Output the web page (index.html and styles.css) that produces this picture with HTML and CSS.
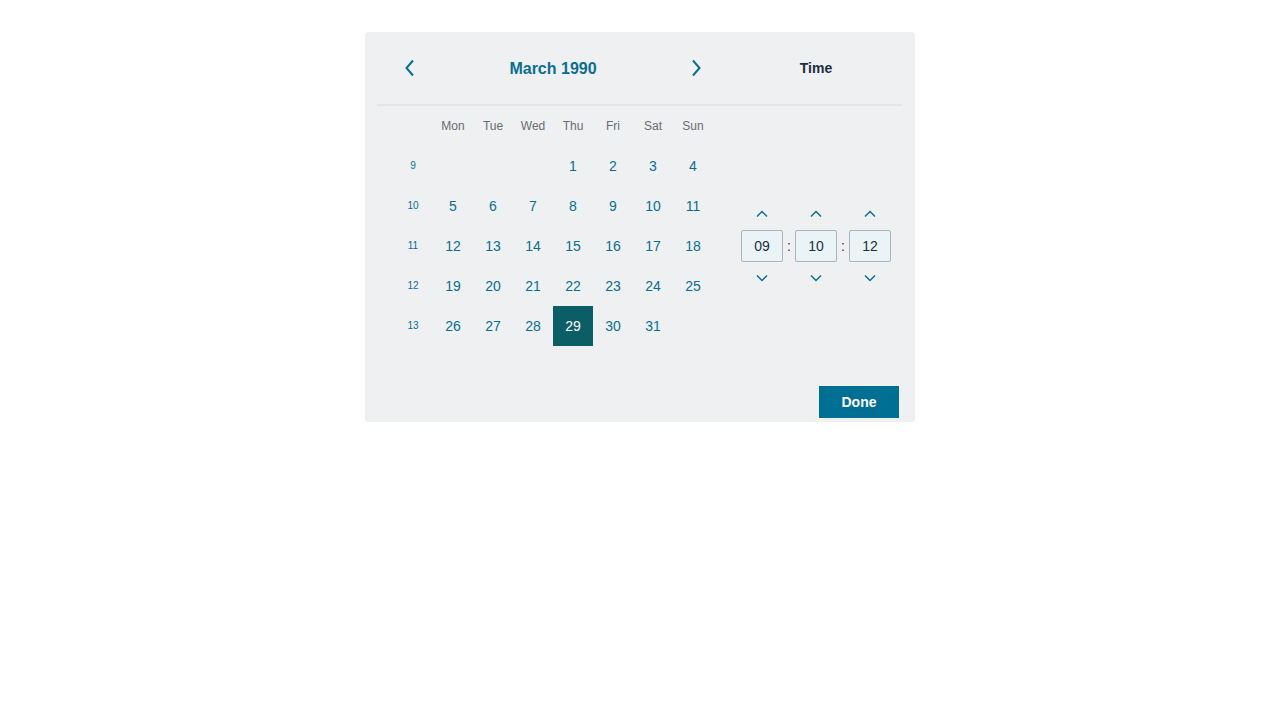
FILE: index.html
```html
<!DOCTYPE html>
<html>
<head>
<meta charset="utf-8">
<link rel="stylesheet" href="styles.css">
</head>
<body>
<div class="picker">
  <div class="top">
    <div class="cal-head">
      <button class="nav"><svg width="12" height="18" viewBox="0 0 12 18"><path d="M10 1.5 L3.5 9 L10 16.5" fill="none" stroke="currentColor" stroke-width="2"/></svg></button>
      <div class="title">March 1990</div>
      <button class="nav"><svg width="12" height="18" viewBox="0 0 12 18"><path d="M2 1.5 L8.5 9 L2 16.5" fill="none" stroke="currentColor" stroke-width="2"/></svg></button>
    </div>
    <div class="time-head">Time</div>
  </div>
  <div class="body">
    <div class="cal">
      <div class="cell"></div>
      <div class="cell dn">Mon</div><div class="cell dn">Tue</div><div class="cell dn">Wed</div><div class="cell dn">Thu</div><div class="cell dn">Fri</div><div class="cell dn">Sat</div><div class="cell dn">Sun</div>

      <div class="cell wk">9</div>
      <div class="cell"></div><div class="cell"></div><div class="cell"></div>
      <div class="cell d">1</div><div class="cell d">2</div><div class="cell d">3</div><div class="cell d">4</div>

      <div class="cell wk">10</div>
      <div class="cell d">5</div><div class="cell d">6</div><div class="cell d">7</div><div class="cell d">8</div><div class="cell d">9</div><div class="cell d">10</div><div class="cell d">11</div>

      <div class="cell wk">11</div>
      <div class="cell d">12</div><div class="cell d">13</div><div class="cell d">14</div><div class="cell d">15</div><div class="cell d">16</div><div class="cell d">17</div><div class="cell d">18</div>

      <div class="cell wk">12</div>
      <div class="cell d">19</div><div class="cell d">20</div><div class="cell d">21</div><div class="cell d">22</div><div class="cell d">23</div><div class="cell d">24</div><div class="cell d">25</div>

      <div class="cell wk">13</div>
      <div class="cell d">26</div><div class="cell d">27</div><div class="cell d">28</div><div class="cell d sel">29</div><div class="cell d">30</div><div class="cell d">31</div><div class="cell"></div>
    </div>
    <div class="time">
      <div class="spin">
        <button class="arrow"><svg width="12" height="8" viewBox="0 0 12 8"><path d="M1 6.5 L6 1.5 L11 6.5" fill="none" stroke="currentColor" stroke-width="1.5"/></svg></button>
        <div class="field">09</div>
        <button class="arrow"><svg width="12" height="8" viewBox="0 0 12 8"><path d="M1 1.5 L6 6.5 L11 1.5" fill="none" stroke="currentColor" stroke-width="1.5"/></svg></button>
      </div>
      <div class="colon">:</div>
      <div class="spin">
        <button class="arrow"><svg width="12" height="8" viewBox="0 0 12 8"><path d="M1 6.5 L6 1.5 L11 6.5" fill="none" stroke="currentColor" stroke-width="1.5"/></svg></button>
        <div class="field">10</div>
        <button class="arrow"><svg width="12" height="8" viewBox="0 0 12 8"><path d="M1 1.5 L6 6.5 L11 1.5" fill="none" stroke="currentColor" stroke-width="1.5"/></svg></button>
      </div>
      <div class="colon">:</div>
      <div class="spin">
        <button class="arrow"><svg width="12" height="8" viewBox="0 0 12 8"><path d="M1 6.5 L6 1.5 L11 6.5" fill="none" stroke="currentColor" stroke-width="1.5"/></svg></button>
        <div class="field">12</div>
        <button class="arrow"><svg width="12" height="8" viewBox="0 0 12 8"><path d="M1 1.5 L6 6.5 L11 1.5" fill="none" stroke="currentColor" stroke-width="1.5"/></svg></button>
      </div>
    </div>
  </div>
  <div class="footer">
    <button class="done">Done</button>
  </div>
</div>
</body>
</html>
```

FILE: styles.css
```css
* { box-sizing: border-box; }
html, body { margin: 0; padding: 0; background: #ffffff; }
body { font-family: "Liberation Sans", Arial, sans-serif; }

.picker {
  width: 550px;
  margin: 32px auto 0;
  background: #eff0f2;
  border-radius: 4px;
  padding: 0 13px 4px 12px;
}

button {
  font-family: inherit;
  border: none;
  background: transparent;
  padding: 0;
  cursor: pointer;
}

.top {
  display: flex;
  height: 74px;
  border-bottom: 2px solid #e3e5e8;
}

.cal-head {
  width: 320px;
  margin-left: 16px;
  display: flex;
  align-items: center;
}

.nav {
  width: 32px;
  height: 32px;
  color: #0a6e91;
  display: flex;
  align-items: center;
  justify-content: center;
}

.title {
  flex: 1;
  text-align: center;
  color: #0a6e91;
  font-size: 16px;
  font-weight: bold;
  padding-top: 2px;
}

.time-head {
  margin-left: 17px;
  flex: 1;
  display: flex;
  align-items: center;
  justify-content: center;
  font-size: 14px;
  font-weight: bold;
  color: #1d2d3e;
}

.body {
  display: flex;
}

.cal {
  margin-left: 16px;
  width: 320px;
  display: grid;
  grid-template-columns: repeat(8, 40px);
  grid-auto-rows: 40px;
}

.cell {
  display: flex;
  align-items: center;
  justify-content: center;
}

.dn {
  font-size: 12px;
  color: #6a6d70;
}

.wk {
  font-size: 10px;
  color: #0a6e91;
  padding-bottom: 2px;
}

.d {
  font-size: 14px;
  color: #0a6e91;
}

.d.sel {
  background: #0b5e66;
  color: #ffffff;
}

.time {
  margin-left: 17px;
  flex: 1;
  display: flex;
  justify-content: center;
  align-items: flex-start;
  padding-top: 92px;
}

.spin {
  width: 42px;
  display: flex;
  flex-direction: column;
  align-items: center;
}

.arrow {
  width: 42px;
  height: 32px;
  color: #0a6e91;
  display: flex;
  align-items: center;
  justify-content: center;
}

.field {
  width: 42px;
  height: 32px;
  border: 1px solid #a9b4be;
  border-radius: 2px;
  background: #eaf4f7;
  display: flex;
  align-items: center;
  justify-content: center;
  font-size: 14px;
  color: #1d2d3e;
}

.colon {
  width: 12px;
  height: 32px;
  margin-top: 32px;
  display: flex;
  align-items: center;
  justify-content: center;
  font-size: 14px;
  color: #32363a;
}

.footer {
  display: flex;
  justify-content: flex-end;
  margin-top: 40px;
  padding-right: 3px;
}

.done {
  width: 80px;
  height: 32px;
  background: #006f94;
  color: #ffffff;
  font-size: 14px;
  font-weight: bold;
}
```
